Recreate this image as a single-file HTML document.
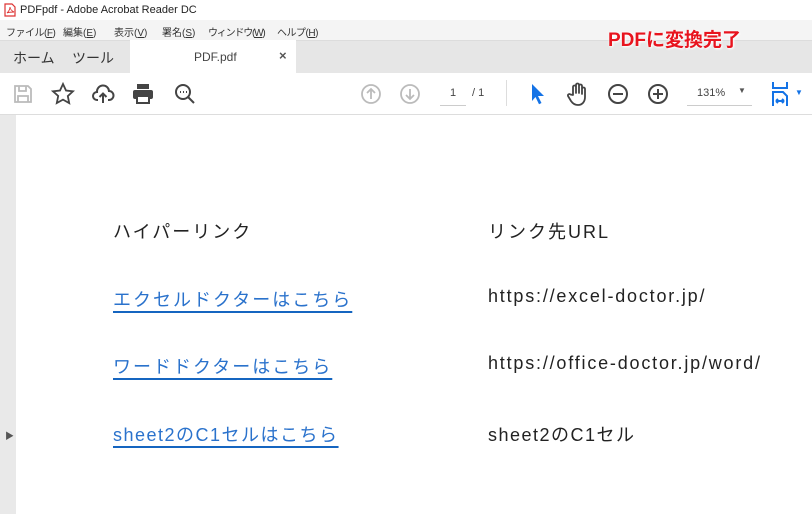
<!DOCTYPE html>
<html><head><meta charset="utf-8"><style>
*{margin:0;padding:0;box-sizing:border-box}
body{width:812px;height:514px;overflow:hidden;background:#fff;font-family:"Liberation Sans","Noto Sans CJK JP",sans-serif;position:relative;color:#222}
.a{position:absolute;white-space:nowrap}
.t{font-size:11px;color:#222}
.m{font-size:10px;color:#333;top:24px;position:absolute;white-space:nowrap}
.doc{font-size:18px;color:#222;letter-spacing:2px}
.u{letter-spacing:1.8px}
.lk{color:#2a72cc;text-decoration:underline;text-decoration-color:#1565c0;text-decoration-thickness:2px;text-underline-offset:5px}
svg{position:absolute}
</style></head><body>
<div class="a" style="left:0;top:0;width:812px;height:20px;background:#fff"></div>
<svg style="left:4px;top:3px" width="12" height="14" viewBox="0 0 12 14"><path d="M1 1h7l3 3v9H1z" fill="#fff" stroke="#d33" stroke-width="1.2"/><path d="M3 10c2-2 3-4 3-6 0 2 2 4 4 5-2 0-5 0-7 1z" fill="none" stroke="#d33" stroke-width="0.9"/></svg>
<div class="a t" style="left:20px;top:4px">PDFpdf - Adobe Acrobat Reader DC</div>
<div class="a" style="left:0;top:20px;width:812px;height:20px;background:#f4f4f4"></div>
<div class="m" style="left:6px;letter-spacing:-0.5px">ファイル(<u>F</u>)</div>
<div class="m" style="left:63px">編集(<u>E</u>)</div>
<div class="m" style="left:114px">表示(<u>V</u>)</div>
<div class="m" style="left:162px">署名(<u>S</u>)</div>
<div class="m" style="left:208px;letter-spacing:-1.2px">ウィンドウ(<u>W</u>)</div>
<div class="m" style="left:277px;letter-spacing:-0.5px">ヘルプ(<u>H</u>)</div>
<div class="a" style="left:0;top:40px;width:812px;height:33px;background:#e6e6e6;border-top:1px solid #dcdcdc"></div>
<div class="a" style="left:130px;top:40px;width:166px;height:33px;background:#fff"></div>
<div class="a" style="left:13px;top:48px;font-size:14px;color:#333">ホーム</div>
<div class="a" style="left:72px;top:48px;font-size:14px;color:#333">ツール</div>
<div class="a" style="left:194px;top:50px;font-size:12px;color:#444">PDF.pdf</div>
<div class="a" style="left:279px;top:48px;font-size:13px;color:#555;font-weight:bold">×</div>
<div class="a" style="left:608px;top:25px;font-size:19px;font-weight:bold;color:#e8141e;text-shadow:0 0 2px #fff,1px 1px 2px #fff">PDFに変換完了</div>
<div class="a" style="left:0;top:73px;width:812px;height:42px;background:#fff;border-bottom:1px solid #ddd"></div>
<svg style="left:12px;top:83px" width="22" height="22" viewBox="0 0 22 22" fill="none" stroke="#bbb" stroke-width="1.8"><path d="M3 3h13l3 3v13H3z"/><path d="M7 3v5h7V3M6 19v-6h10v6"/></svg>
<svg style="left:51px;top:82px" width="24" height="24" viewBox="0 0 24 24" fill="none" stroke="#444" stroke-width="1.8"><path d="M12 2l3 6.5 7 .8-5.2 4.8 1.4 7L12 17.6 5.8 21l1.4-7L2 9.3l7-.8z"/></svg>
<svg style="left:91px;top:82px" width="24" height="24" viewBox="0 0 24 24" fill="none" stroke="#444" stroke-width="2"><path d="M7 18H6a4 4 0 010-8 6 6 0 0112-1 4.5 4.5 0 010 9h-1"/><path d="M12 21v-9M8.5 15l3.5-3.5 3.5 3.5"/></svg>
<svg style="left:131px;top:82px" width="24" height="24" viewBox="0 0 24 24"><rect x="6" y="2" width="12" height="5" fill="#444"/><rect x="2" y="8" width="20" height="9" rx="2" fill="#444"/><rect x="6" y="14" width="12" height="7" fill="#fff" stroke="#444" stroke-width="2"/></svg>
<svg style="left:173px;top:82px" width="24" height="24" viewBox="0 0 24 24" fill="none" stroke="#444" stroke-width="2"><circle cx="10" cy="10" r="7"/><path d="M15 15l6 6"/><path d="M7 10h1M10 10h1M13 10h1"/></svg>
<svg style="left:360px;top:83px" width="22" height="22" viewBox="0 0 22 22" fill="none" stroke="#bbb" stroke-width="1.8"><circle cx="11" cy="11" r="9"/><path d="M11 16V6M7 10l4-4 4 4"/></svg>
<svg style="left:399px;top:83px" width="22" height="22" viewBox="0 0 22 22" fill="none" stroke="#bbb" stroke-width="1.8"><circle cx="11" cy="11" r="9"/><path d="M11 6v10M7 12l4 4 4-4"/></svg>
<div class="a" style="left:440px;top:87px;font-size:11px;color:#444;width:26px;text-align:center">1</div>
<div class="a" style="left:440px;top:105px;width:26px;height:1px;background:#ccc"></div>
<div class="a" style="left:472px;top:87px;font-size:11px;color:#444">/ 1</div>
<div class="a" style="left:506px;top:80px;width:1px;height:26px;background:#ddd"></div>
<svg style="left:528px;top:82px" width="20" height="24" viewBox="0 0 20 24"><path d="M4 2l12 12h-6l3.5 7-2.5 1.2L7.5 15 4 19z" fill="#1473e6"/></svg>
<svg style="left:566px;top:81px" width="24" height="26" viewBox="0 0 24 26" fill="none" stroke="#444" stroke-width="1.8" stroke-linejoin="round"><path d="M7 14V6a1.5 1.5 0 013 0v6V4a1.5 1.5 0 013 0v8V5a1.5 1.5 0 013 0v8V8a1.5 1.5 0 013 0v8c0 5-3 8-7 8-3 0-5-1-7-4l-3-5a1.5 1.5 0 012.5-1.5z"/></svg>
<svg style="left:606px;top:82px" width="24" height="24" viewBox="0 0 24 24" fill="none" stroke="#444" stroke-width="2"><circle cx="12" cy="12" r="9"/><path d="M7 12h10"/></svg>
<svg style="left:646px;top:82px" width="24" height="24" viewBox="0 0 24 24" fill="none" stroke="#444" stroke-width="2"><circle cx="12" cy="12" r="9"/><path d="M7 12h10M12 7v10"/></svg>
<div class="a" style="left:697px;top:87px;font-size:11px;color:#444">131%</div>
<div class="a" style="left:738px;top:86px;font-size:8px;color:#555">▼</div>
<div class="a" style="left:687px;top:105px;width:65px;height:1px;background:#ccc"></div>
<svg style="left:771px;top:81px" width="22" height="26" viewBox="0 0 22 26" fill="none" stroke="#1473e6" stroke-width="2"><path d="M2 1v6h14V1M2 25V11h10l4 4v10M5 20h8M5 20l2-2M5 20l2 2M13 20l-2-2M13 20l-2 2"/></svg>
<div class="a" style="left:795px;top:88px;font-size:8px;color:#1473e6">▼</div>
<div class="a" style="left:0;top:115px;width:16px;height:399px;background:#e9e9e9"></div>
<div class="a" style="left:5px;top:429px;font-size:9px;color:#555">▶</div>
<div class="a doc" style="left:113px;top:218px">ハイパーリンク</div>
<div class="a doc" style="left:488px;top:218px">リンク先URL</div>
<div class="a doc lk" style="left:113px;top:286px">エクセルドクターはこちら</div>
<div class="a doc u" style="left:488px;top:286px">https://excel-doctor.jp/</div>
<div class="a doc lk" style="left:113px;top:353px">ワードドクターはこちら</div>
<div class="a doc u" style="left:488px;top:353px">https://office-doctor.jp/word/</div>
<div class="a doc lk" style="left:113px;top:421px;letter-spacing:1.5px">sheet2のC1セルはこちら</div>
<div class="a doc" style="left:488px;top:421px;letter-spacing:1.5px">sheet2のC1セル</div>
</body></html>
